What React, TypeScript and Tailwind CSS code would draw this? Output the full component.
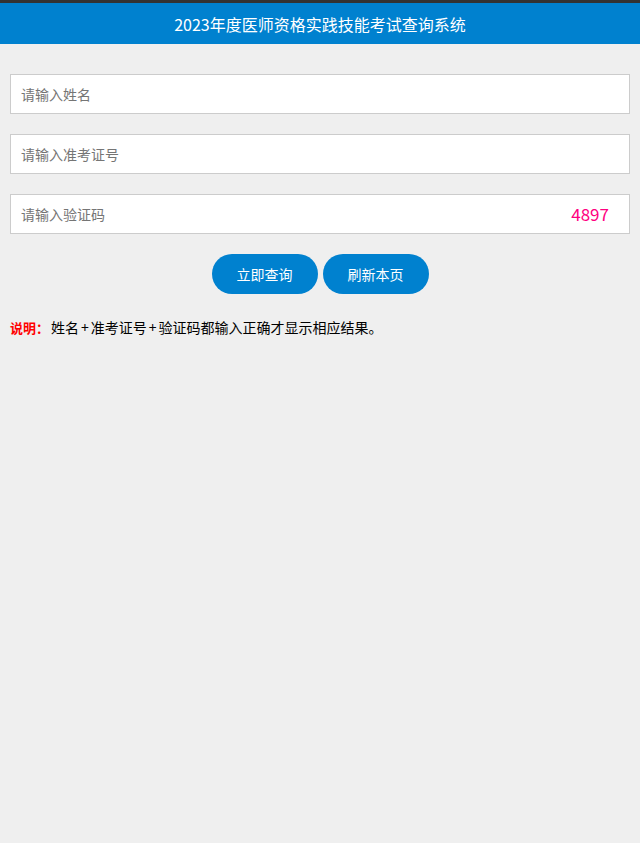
export default function App() {
  const font = { fontFamily: '"Microsoft YaHei", "Noto Sans CJK SC", sans-serif' };
  return (
    <div className="min-h-[843px] w-[640px] bg-[#efefef]" style={font}>
      <div className="h-[3px] bg-[#333333]" />
      <header className="flex h-[41px] items-center justify-center bg-[#0081cf] text-[16px] text-white">
        2023年度医师资格实践技能考试查询系统
      </header>

      <div className="flex flex-col gap-5 px-[10px] pt-[30px]">
        <input
          className="h-10 w-full border border-[#cccccc] bg-white px-[10px] text-[14px] text-[#333] outline-none placeholder:text-[#757575]"
          placeholder="请输入姓名"
        />
        <input
          className="h-10 w-full border border-[#cccccc] bg-white px-[10px] text-[14px] text-[#333] outline-none placeholder:text-[#757575]"
          placeholder="请输入准考证号"
        />
        <div className="flex h-10 w-full items-center border border-[#cccccc] bg-white pr-5">
          <input
            className="h-full flex-1 bg-transparent px-[10px] text-[14px] text-[#333] outline-none placeholder:text-[#757575]"
            placeholder="请输入验证码"
          />
          <span className="text-[17px] text-[#ff0080]">4897</span>
        </div>
      </div>

      <div className="mt-5 flex justify-center gap-[5px]">
        <button className="h-10 w-[106px] rounded-full bg-[#0081cf] text-[14px] text-white">立即查询</button>
        <button className="h-10 w-[106px] rounded-full bg-[#0081cf] text-[14px] text-white">刷新本页</button>
      </div>

      <p className="mt-[23px] px-[10px] text-[14px] text-black">
        <span className="mr-[2px] text-[13px] font-bold text-[#ff0000]">说明：</span>姓名
        <span className="mx-[2px]">+</span>准考证号<span className="mx-[2px]">+</span>
        验证码都输入正确才显示相应结果。
      </p>
    </div>
  );
}
